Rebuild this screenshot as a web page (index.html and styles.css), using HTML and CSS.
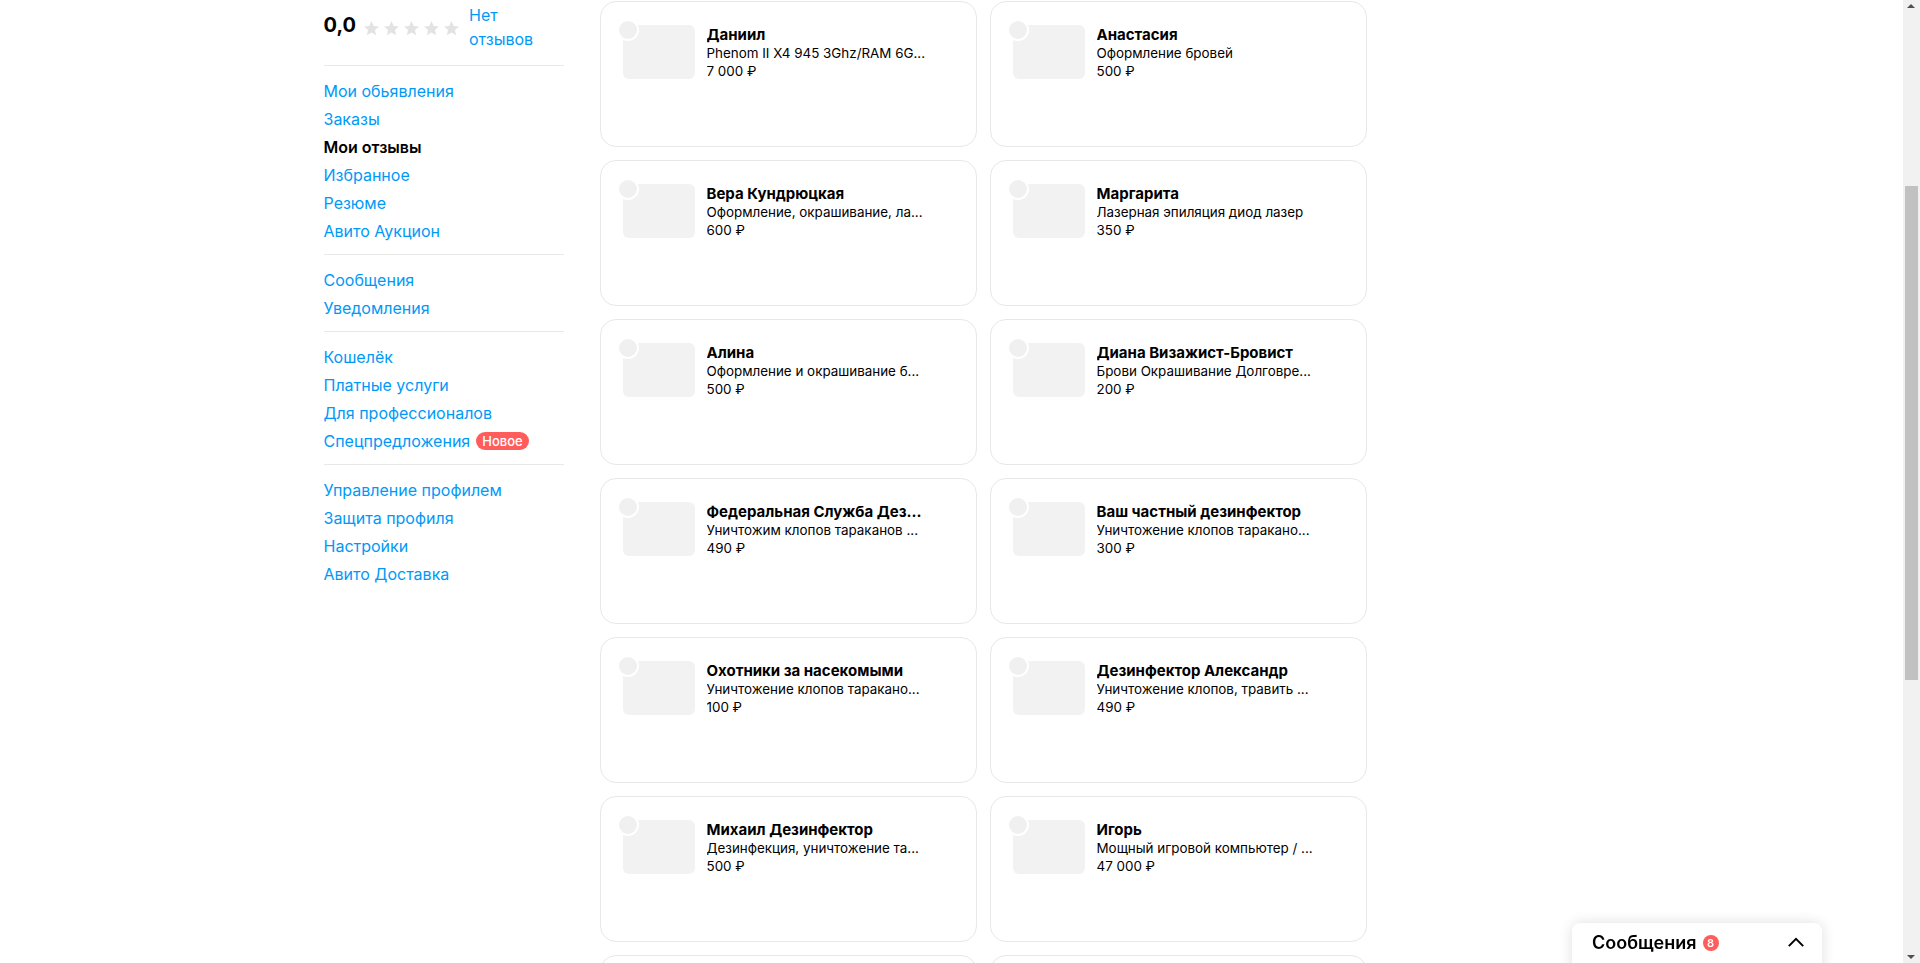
FILE: index.html
```html
<!DOCTYPE html>
<html lang="ru">
<head>
<meta charset="utf-8">
<title>Мои отзывы</title>
<link rel="stylesheet" href="styles.css">
</head>
<body>
<div class="page">
  <div class="container">
    <aside class="sidebar">
      <div class="rating">
        <span class="score">0,0</span>
        <span class="stars">
          <svg class="star" viewBox="0 0 24 24"><path d="M12 1.5l3.1 6.9 7.4.8-5.6 5 1.6 7.4L12 17.8l-6.5 3.8 1.6-7.4-5.6-5 7.4-.8z"/></svg>
          <svg class="star" viewBox="0 0 24 24"><path d="M12 1.5l3.1 6.9 7.4.8-5.6 5 1.6 7.4L12 17.8l-6.5 3.8 1.6-7.4-5.6-5 7.4-.8z"/></svg>
          <svg class="star" viewBox="0 0 24 24"><path d="M12 1.5l3.1 6.9 7.4.8-5.6 5 1.6 7.4L12 17.8l-6.5 3.8 1.6-7.4-5.6-5 7.4-.8z"/></svg>
          <svg class="star" viewBox="0 0 24 24"><path d="M12 1.5l3.1 6.9 7.4.8-5.6 5 1.6 7.4L12 17.8l-6.5 3.8 1.6-7.4-5.6-5 7.4-.8z"/></svg>
          <svg class="star" viewBox="0 0 24 24"><path d="M12 1.5l3.1 6.9 7.4.8-5.6 5 1.6 7.4L12 17.8l-6.5 3.8 1.6-7.4-5.6-5 7.4-.8z"/></svg>
        </span>
        <a class="reviews-link" href="#">Нет отзывов</a>
      </div>
      <nav class="nav-section">
        <a class="nav-link" href="#">Мои обьявления</a>
        <a class="nav-link" href="#">Заказы</a>
        <span class="nav-link active">Мои отзывы</span>
        <a class="nav-link" href="#">Избранное</a>
        <a class="nav-link" href="#">Резюме</a>
        <a class="nav-link" href="#">Авито Аукцион</a>
      </nav>
      <nav class="nav-section">
        <a class="nav-link" href="#">Сообщения</a>
        <a class="nav-link" href="#">Уведомления</a>
      </nav>
      <nav class="nav-section">
        <a class="nav-link" href="#">Кошелёк</a>
        <a class="nav-link" href="#">Платные услуги</a>
        <a class="nav-link" href="#">Для профессионалов</a>
        <a class="nav-link" href="#">Спецпредложения <span class="badge-new">Новое</span></a>
      </nav>
      <nav class="nav-section last">
        <a class="nav-link" href="#">Управление профилем</a>
        <a class="nav-link" href="#">Защита профиля</a>
        <a class="nav-link" href="#">Настройки</a>
        <a class="nav-link" href="#">Авито Доставка</a>
      </nav>
    </aside>

    <main class="cards">
      <div class="card"><div class="thumb"></div><div class="info"><div class="name">Даниил</div><div class="desc">Phenom II X4 945 3Ghz/RAM 6G...</div><div class="price">7 000 ₽</div></div></div>
      <div class="card"><div class="thumb"></div><div class="info"><div class="name">Анастасия</div><div class="desc">Оформление бровей</div><div class="price">500 ₽</div></div></div>

      <div class="card"><div class="thumb"></div><div class="info"><div class="name">Вера Кундрюцкая</div><div class="desc">Оформление, окрашивание, ла...</div><div class="price">600 ₽</div></div></div>
      <div class="card"><div class="thumb"></div><div class="info"><div class="name">Маргарита</div><div class="desc">Лазерная эпиляция диод лазер</div><div class="price">350 ₽</div></div></div>

      <div class="card"><div class="thumb"></div><div class="info"><div class="name">Алина</div><div class="desc">Оформление и окрашивание б...</div><div class="price">500 ₽</div></div></div>
      <div class="card"><div class="thumb"></div><div class="info"><div class="name">Диана Визажист-Бровист</div><div class="desc">Брови Окрашивание Долговре...</div><div class="price">200 ₽</div></div></div>

      <div class="card"><div class="thumb"></div><div class="info"><div class="name">Федеральная Служба Дез...</div><div class="desc">Уничтожим клопов тараканов ...</div><div class="price">490 ₽</div></div></div>
      <div class="card"><div class="thumb"></div><div class="info"><div class="name">Ваш частный дезинфектор</div><div class="desc">Уничтожение клопов таракано...</div><div class="price">300 ₽</div></div></div>

      <div class="card"><div class="thumb"></div><div class="info"><div class="name">Охотники за насекомыми</div><div class="desc">Уничтожение клопов таракано...</div><div class="price">100 ₽</div></div></div>
      <div class="card"><div class="thumb"></div><div class="info"><div class="name">Дезинфектор Александр</div><div class="desc">Уничтожение клопов, травить ...</div><div class="price">490 ₽</div></div></div>

      <div class="card"><div class="thumb"></div><div class="info"><div class="name">Михаил Дезинфектор</div><div class="desc">Дезинфекция, уничтожение та...</div><div class="price">500 ₽</div></div></div>
      <div class="card"><div class="thumb"></div><div class="info"><div class="name">Игорь</div><div class="desc">Мощный игровой компьютер / ...</div><div class="price">47 000 ₽</div></div></div>

      <div class="card"></div>
      <div class="card"></div>
    </main>
  </div>
</div>

<div class="messenger">
  <span class="messenger-title">Сообщения</span>
  <span class="messenger-count">8</span>
  <svg class="chevron" viewBox="0 0 20 12"><path d="M2 10L10 2l8 8"/></svg>
</div>

<div class="scrollbar">
  <span class="sb-arrow up"></span>
  <span class="sb-thumb"></span>
  <span class="sb-arrow down"></span>
</div>
</body>
</html>
```
FILE: styles.css
```css
html, body {
  margin: 0;
  padding: 0;
  height: 100%;
  overflow: hidden;
  background: #fff;
  font-family: Inter, "Noto Sans", sans-serif;
  color: #000;
}

a { text-decoration: none; }

.page {
  width: calc(100% - 17px);
}

.container {
  width: 1256px;
  margin: 0 auto;
  display: flex;
  gap: 36px;
  align-items: flex-start;
}

/* Sidebar */
.sidebar {
  width: 240px;
  flex: none;
}

.rating {
  display: flex;
  align-items: flex-start;
  padding-top: 3px;
  padding-bottom: 14px;
  border-bottom: 1px solid #e8e8e8;
}

.score {
  font-size: 20px;
  font-weight: 700;
  line-height: 24px;
  margin-top: 10px;
  margin-right: 7px;
}

.stars {
  display: flex;
  gap: 3px;
  margin-top: 17px;
  margin-right: 9px;
}

.star {
  width: 17px;
  height: 17px;
  fill: #e3e3e3;
}

.reviews-link {
  width: 80px;
  font-size: 16px;
  line-height: 24px;
  color: #0099f7;
}

.nav-section {
  display: flex;
  flex-direction: column;
  padding: 10px 0;
  border-bottom: 1px solid #e8e8e8;
}

.nav-section.last {
  border-bottom: none;
}

.nav-link {
  font-size: 16px;
  line-height: 28px;
  color: #0099f7;
  display: flex;
  align-items: center;
  white-space: nowrap;
  margin-top: 1px;
  margin-bottom: -1px;
}

.nav-link.active {
  color: #000;
  font-weight: 600;
}

.badge-new {
  display: inline-block;
  margin-left: 6px;
  height: 18px;
  line-height: 18px;
  padding: 0 6px;
  border-radius: 9px;
  background: #ff5c5c;
  color: #fff;
  font-size: 13px;
  font-weight: 500;
}

/* Cards */
.cards {
  display: grid;
  grid-template-columns: 377px 377px;
  column-gap: 13px;
  row-gap: 13px;
  padding-top: 1px;
}

.card {
  box-sizing: border-box;
  height: 146px;
  border: 1px solid #e8e8e8;
  border-radius: 16px;
  padding: 22px;
  display: flex;
  gap: 12px;
  align-items: flex-start;
}

.thumb {
  position: relative;
  flex: none;
  width: 72px;
  height: 54px;
  margin-top: 1px;
  border-radius: 6px;
  background: #f2f2f2;
}

.thumb::before {
  content: "";
  position: absolute;
  left: -6px;
  top: -6px;
  width: 22px;
  height: 22px;
  box-sizing: border-box;
  border-radius: 50%;
  background: #f0f0f0;
  border: 2px solid #fff;
}

.info {
  width: 226px;
  margin-top: 1px;
}

.name, .desc, .price {
  white-space: nowrap;
  overflow: hidden;
  text-overflow: ellipsis;
}

.name {
  font-size: 15px;
  font-weight: 700;
  line-height: 19px;
}

.desc, .price {
  font-size: 13.4px;
  line-height: 18px;
}

/* Messenger widget */
.messenger {
  position: fixed;
  left: 1572px;
  top: 923px;
  width: 250px;
  height: 60px;
  box-sizing: border-box;
  padding: 10px 17px 0 20px;
  display: flex;
  align-items: flex-start;
  background: #fff;
  border-radius: 8px 8px 0 0;
  box-shadow: 0 0 14px rgba(0, 0, 0, 0.13);
}

.messenger-title {
  font-size: 18px;
  font-weight: 600;
  line-height: 20px;
}

.messenger-count {
  margin-left: 6px;
  margin-top: 2px;
  width: 16px;
  height: 16px;
  border-radius: 50%;
  background: #ff5c5c;
  color: #fff;
  font-size: 11px;
  font-weight: 600;
  line-height: 16px;
  text-align: center;
}

.chevron {
  margin-left: auto;
  margin-top: 4px;
  width: 18px;
  height: 11px;
  fill: none;
  stroke: #000;
  stroke-width: 2.2;
}

/* Fake browser scrollbar */
.scrollbar {
  position: fixed;
  top: 0;
  right: 0;
  width: 17px;
  height: 100%;
  background: #f1f1f1;
}

.sb-thumb {
  position: absolute;
  left: 2px;
  top: 186px;
  width: 13px;
  height: 494px;
  background: #c1c1c1;
}

.sb-arrow {
  position: absolute;
  left: 4px;
  width: 0;
  height: 0;
  border-left: 4.5px solid transparent;
  border-right: 4.5px solid transparent;
}

.sb-arrow.up {
  top: 4px;
  border-bottom: 4px solid #505050;
}

.sb-arrow.down {
  bottom: 4px;
  border-top: 4px solid #505050;
}
```
